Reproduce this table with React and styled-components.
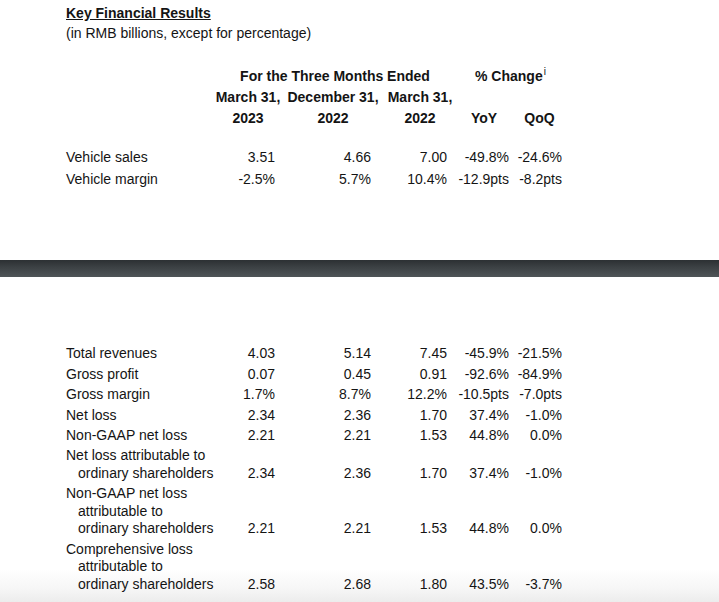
import React from "react";
import styled, { createGlobalStyle } from "styled-components";

const GlobalStyle = createGlobalStyle`
  body {
    margin: 0;
    background: #fff;
    font-family: "Liberation Sans", Arial, sans-serif;
    color: #141414;
  }
`;

// right padding for each number column, so the figures line up
const PR = [6, 14, 8, 4, 4];

const vehicle = [
  ["Vehicle sales", "3.51", "4.66", "7.00", "-49.8%", "-24.6%"],
  ["Vehicle margin", "-2.5%", "5.7%", "10.4%", "-12.9pts", "-8.2pts"],
];

const results = [
  [["Total revenues"], "4.03", "5.14", "7.45", "-45.9%", "-21.5%"],
  [["Gross profit"], "0.07", "0.45", "0.91", "-92.6%", "-84.9%"],
  [["Gross margin"], "1.7%", "8.7%", "12.2%", "-10.5pts", "-7.0pts"],
  [["Net loss"], "2.34", "2.36", "1.70", "37.4%", "-1.0%"],
  [["Non-GAAP net loss"], "2.21", "2.21", "1.53", "44.8%", "0.0%"],
  [["Net loss attributable to", "ordinary shareholders"], "2.34", "2.36", "1.70", "37.4%", "-1.0%"],
  [["Non-GAAP net loss", "attributable to", "ordinary shareholders"], "2.21", "2.21", "1.53", "44.8%", "0.0%"],
  [["Comprehensive loss", "attributable to", "ordinary shareholders"], "2.58", "2.68", "1.80", "43.5%", "-3.7%"],
];

const Page = styled.div`
  width: 719px;
  height: 602px;
  overflow: hidden;
  display: flex;
  flex-direction: column;
`;

const Sheet = styled.section`
  padding: ${(p) => p.$top}px 0 0 66px;
  height: ${(p) => p.$height}px;
  box-sizing: border-box;
  background: ${(p) =>
    p.$shade
      ? "linear-gradient(180deg, #fff 0, #fff 90%, #f6f6f6 96%, #ececec 100%)"
      : "#fff"};
`;

const PageBreak = styled.div`
  height: 17px;
  background: linear-gradient(180deg, #2c3033 0%, #3d4245 45%, #4f5558 100%);
`;

const Title = styled.div`
  font-size: 14px;
  line-height: 20px;
  font-weight: bold;
  text-decoration: underline;
`;

const Subtitle = styled.div`
  font-size: 14px;
  line-height: 20px;
`;

const Row = styled.div`
  display: grid;
  grid-template-columns: 149px 66px 104px 70px 58px 53px;
  font-size: 14px;
  line-height: ${(p) => p.$lh}px;
  padding: ${(p) => p.$pad || 0}px 0;
  font-weight: ${(p) => (p.$bold ? "bold" : "normal")};
`;

const Head = styled.div`
  margin-top: 22.5px;
  margin-bottom: 17px;
`;

const Cell = styled.div`
  grid-column: ${(p) => p.$span || "auto"};
  text-align: ${(p) => p.$align || "right"};
  padding-right: ${(p) => p.$pr || 0}px;
  align-self: end;
  white-space: nowrap;
`;

const Label = styled.div`
  white-space: nowrap;
`;

const Indent = styled.div`
  padding-left: 12px;
`;

const Sup = styled.sup`
  font-size: 10px;
  font-weight: normal;
  vertical-align: 6px;
  line-height: 0;
  margin-left: 1px;
`;

const Table = styled.div`
  margin-top: ${(p) => p.$top}px;
`;

const Numbers = ({ values }) =>
  values.map((v, i) => (
    <Cell key={i} $pr={PR[i]}>
      {v}
    </Cell>
  ));

const App = () => {
  return (
    <>
      <GlobalStyle />
      <Page>
        <Sheet $top={3} $height={260}>
          <Title>Key Financial Results</Title>
          <Subtitle>(in RMB billions, except for percentage)</Subtitle>

          {/* column headings */}
          <Head>
            <Row $lh={21} $bold>
              <Cell $span="2 / 5" $align="center">
                For the Three Months Ended
              </Cell>
              <Cell $span="5 / 7" $align="center">
                % Change<Sup>i</Sup>
              </Cell>
            </Row>
            <Row $lh={21} $bold>
              <Cell />
              <Cell $align="center">March 31,</Cell>
              <Cell $align="center">December 31,</Cell>
              <Cell $align="center">March 31,</Cell>
            </Row>
            <Row $lh={21} $bold>
              <Cell />
              <Cell $align="center">2023</Cell>
              <Cell $align="center">2022</Cell>
              <Cell $align="center">2022</Cell>
              <Cell $align="center">YoY</Cell>
              <Cell $align="center">QoQ</Cell>
            </Row>
          </Head>

          {vehicle.map(([label, ...values]) => (
            <Row key={label} $lh={22}>
              <Label>{label}</Label>
              <Numbers values={values} />
            </Row>
          ))}
        </Sheet>

        <PageBreak />

        <Sheet $top={0} $height={325} $shade>
          <Table $top={67}>
            {results.map(([lines, ...values]) => (
              <Row key={lines.join(" ")} $lh={17.6} $pad={1.4}>
                <Label>
                  {lines.map((line, i) =>
                    i === 0 ? <div key={i}>{line}</div> : <Indent key={i}>{line}</Indent>
                  )}
                </Label>
                <Numbers values={values} />
              </Row>
            ))}
          </Table>
        </Sheet>
      </Page>
    </>
  );
};

export default App;
